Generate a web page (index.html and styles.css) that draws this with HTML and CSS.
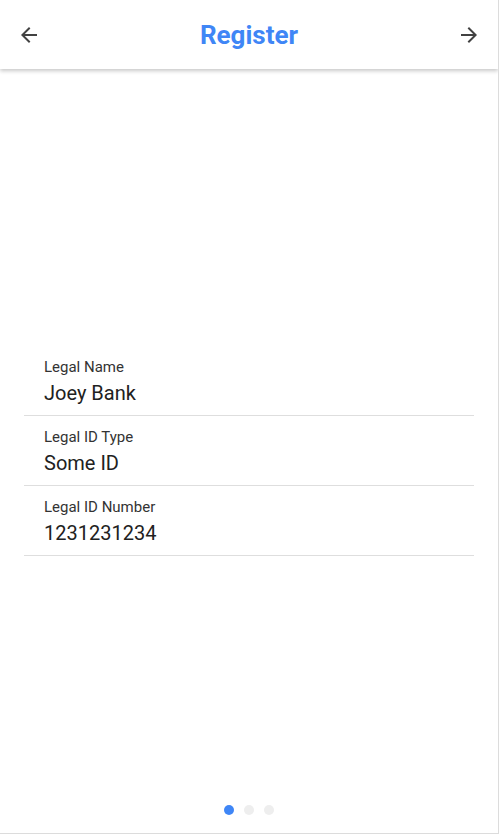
FILE: index.html
```html
<!DOCTYPE html>
<html>
<head>
<meta charset="utf-8">
<link rel="stylesheet" href="styles.css">
</head>
<body>
<div class="frame">
  <header class="topbar">
    <button class="icon-btn" aria-label="Back">
      <svg viewBox="0 0 24 24" width="24" height="24"><path d="M20 11H7.83l5.59-5.59L12 4l-8 8 8 8 1.41-1.41L7.83 13H20v-2z"/></svg>
    </button>
    <h1 class="title">Register</h1>
    <button class="icon-btn" aria-label="Next">
      <svg viewBox="0 0 24 24" width="24" height="24"><path d="M12 4l-1.41 1.41L16.17 11H4v2h12.17l-5.58 5.59L12 20l8-8z"/></svg>
    </button>
  </header>
  <main class="content">
    <div class="fields-wrap">
      <ul class="fields">
        <li class="field"><span class="label">Legal Name</span><span class="value">Joey Bank</span></li>
        <li class="field"><span class="label">Legal ID Type</span><span class="value">Some ID</span></li>
        <li class="field"><span class="label">Legal ID Number</span><span class="value">1231231234</span></li>
      </ul>
    </div>
    <div class="dots">
      <span class="dot active"></span>
      <span class="dot"></span>
      <span class="dot"></span>
    </div>
  </main>
</div>
</body>
</html>
```
FILE: styles.css
```css
html, body {
  margin: 0;
  padding: 0;
  background: #ffffff;
}
body {
  font-family: Roboto, "Noto Sans", sans-serif;
  color: #212121;
}
.frame {
  width: 498px;
  height: 833px;
  border-right: 1px solid #dcdcdc;
  border-bottom: 1px solid #dcdcdc;
  display: flex;
  flex-direction: column;
  overflow: hidden;
}
.topbar {
  height: 69px;
  flex: none;
  display: flex;
  align-items: center;
  justify-content: space-between;
  padding: 0 17px;
  box-shadow: 0 2px 4px rgba(0, 0, 0, 0.22);
  position: relative;
  z-index: 1;
  background: #fff;
}
.icon-btn {
  width: 24px;
  height: 24px;
  padding: 0;
  border: 0;
  background: none;
  display: flex;
}
.icon-btn svg {
  fill: #424242;
}
.title {
  margin: 0;
  font-size: 26px;
  font-weight: 700;
  color: #3f86f6;
  line-height: 28px;
}
.content {
  flex: 1;
  display: flex;
  flex-direction: column;
}
.fields-wrap {
  flex: 1;
  display: flex;
  flex-direction: column;
  justify-content: center;
  padding-top: 38px;
}
.fields {
  list-style: none;
  margin: 0 24px;
  padding: 0;
}
.field {
  display: flex;
  flex-direction: column;
  gap: 2px;
  padding: 11px 20px 8px;
  border-bottom: 1px solid #dedede;
}
.label {
  font-size: 15px;
  line-height: 20px;
  color: #333333;
}
.value {
  font-size: 20px;
  line-height: 28px;
  color: #212121;
}
.dots {
  display: flex;
  justify-content: center;
  gap: 10px;
  padding: 10px 0 18px;
}
.dot {
  width: 10px;
  height: 10px;
  border-radius: 50%;
  background: #eeeeee;
}
.dot.active {
  background: #3f86f6;
}
```
